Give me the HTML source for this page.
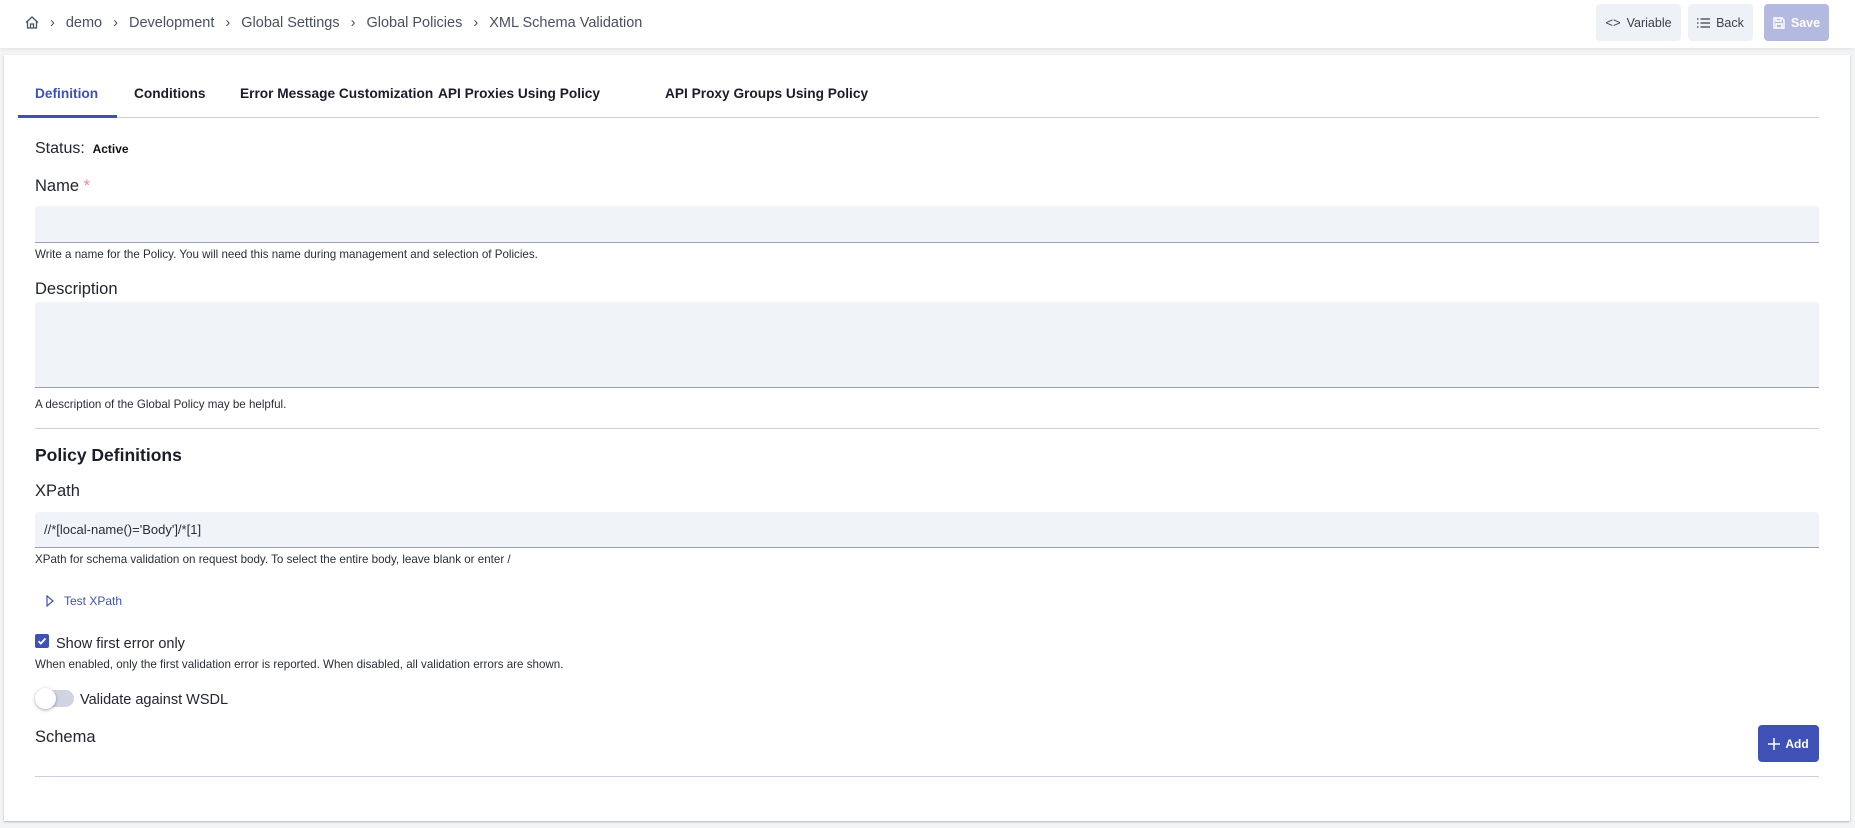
<!DOCTYPE html>
<html><head><meta charset="utf-8"><style>
*{box-sizing:border-box;margin:0;padding:0}
body{width:1855px;height:828px;background:#f3f4f6;font-family:"Liberation Sans",Arial,sans-serif;position:relative;overflow:hidden;color:#1f2430}
.hdr{position:absolute;left:0;top:0;width:1855px;height:48px;background:#fff;box-shadow:0 1px 4px rgba(0,0,0,.08)}
.bc{position:absolute;top:13px;left:25px;font-size:14.5px;color:#4a5060;display:flex;align-items:center;height:19px}
.bc .s{margin:0 11px;color:#4a5060}
.btn{position:absolute;top:4px;height:37px;border-radius:4px;background:#eef2f7;font-size:12.5px;color:#3a4050;display:flex;align-items:center;justify-content:center;gap:6px}
.card{position:absolute;left:4px;top:55px;width:1846px;height:766px;background:#fff;box-shadow:0 1px 2px rgba(0,0,0,.25)}
.a{position:absolute}
.tab{position:absolute;top:86px;font-size:13.7px;font-weight:bold;color:#1a1d29}
.lbl{position:absolute;left:35px;font-size:16.5px;color:#22262f}
.help{position:absolute;left:35px;font-size:11.6px;color:#2a2e38}
.inp{position:absolute;left:35px;width:1784px;background:#f0f3f8;border-bottom:1px solid #9aa0b4;border-radius:3px 3px 0 0}
</style></head><body>
<div class="hdr">
 <div class="bc">
  <svg width="14" height="13" viewBox="0 0 14 13" fill="none" stroke="#4a5060" stroke-width="1.3"><path d="M1 6.5L7 1l6 5.5M2.5 5.3V12h9V5.3M5.5 12V8h3v4"/></svg>
  <span class="s">›</span>demo<span class="s">›</span>Development<span class="s">›</span>Global Settings<span class="s">›</span>Global Policies<span class="s">›</span>XML Schema Validation
 </div>
 <div class="btn" style="left:1596px;width:85px"><span style="font-size:13px">&lt;&gt;</span>Variable</div>
 <div class="btn" style="left:1688px;width:65px"><svg width="13" height="10" viewBox="0 0 13 10" stroke="#3a4050" stroke-width="1.2"><path d="M0 1h1.5M0 5h1.5M0 9h1.5M3.5 1H13M3.5 5H13M3.5 9H13"/></svg>Back</div>
 <div class="btn" style="left:1764px;width:65px;background:#b4b9e0;color:#fff;font-weight:bold"><svg width="12" height="12" viewBox="0 0 12 12" fill="none" stroke="#fff" stroke-width="1.4"><path d="M1 1h8l2 2v8H1z M3 1v3h5V1 M3 11V7h6v4"/></svg>Save</div>
</div>
<div class="card"></div>
<div class="tab" style="left:35px;color:#3f51b5">Definition</div>
<div class="tab" style="left:134px">Conditions</div>
<div class="tab" style="left:240px">Error Message Customization</div>
<div class="tab" style="left:438px">API Proxies Using Policy</div>
<div class="tab" style="left:665px">API Proxy Groups Using Policy</div>
<div class="a" style="left:18px;top:117px;width:1801px;height:1px;background:#c9cfdc"></div>
<div class="a" style="left:18px;top:115px;width:99px;height:3px;background:#3f51b5"></div>

<div class="lbl" style="top:140px;font-size:16px">Status: <b style="font-size:12px;color:#111">&nbsp;Active</b></div>
<div class="lbl" style="top:177px">Name <span style="color:#f08a8a">*</span></div>
<div class="inp" style="top:206px;height:37px"></div>
<div class="help" style="top:248px">Write a name for the Policy. You will need this name during management and selection of Policies.</div>
<div class="lbl" style="top:280px">Description</div>
<div class="inp" style="top:302px;height:86px"></div>
<div class="help" style="top:398px">A description of the Global Policy may be helpful.</div>
<div class="a" style="left:35px;top:428px;width:1784px;height:1px;background:#c9cfdc"></div>
<div class="a" style="left:35px;top:445px;font-size:17.5px;font-weight:bold;color:#1a1d29">Policy Definitions</div>
<div class="lbl" style="top:482px">XPath</div>
<div class="inp" style="top:512px;height:36px"><span style="position:absolute;left:9px;top:10px;font-size:13px;color:#2a2e38">//*[local-name()='Body']/*[1]</span></div>
<div class="help" style="top:553px">XPath for schema validation on request body. To select the entire body, leave blank or enter /</div>
<svg class="a" style="left:46px;top:595px" width="8" height="12" viewBox="0 0 8 12" fill="none" stroke="#3f51b5" stroke-width="1.2"><path d="M1 1l6 5-6 5z"/></svg>
<div class="a" style="left:64px;top:594px;font-size:12px;color:#3f51b5">Test XPath</div>
<div class="a" style="left:35px;top:634px;width:14px;height:14px;background:#3f51b5;border-radius:2px"><svg width="14" height="14" viewBox="0 0 14 14" fill="none" stroke="#fff" stroke-width="1.8"><path d="M3.5 7.2l2.3 2.3 4.7-5"/></svg></div>
<div class="lbl" style="left:56px;top:636px;font-size:14.5px">Show first error only</div>
<div class="help" style="top:658px">When enabled, only the first validation error is reported. When disabled, all validation errors are shown.</div>
<div class="a" style="left:36px;top:690px;width:38px;height:17px;border-radius:9px;background:#cfd4e2"></div>
<div class="a" style="left:35px;top:688px;width:21px;height:21px;border-radius:50%;background:#fff;box-shadow:0 1px 3px rgba(0,0,0,.35)"></div>
<div class="lbl" style="left:80px;top:692px;font-size:14.5px">Validate against WSDL</div>
<div class="lbl" style="top:728px">Schema</div>
<div class="a" style="left:1758px;top:725px;width:61px;height:37px;background:#3f51b5;border-radius:4px;color:#fff;font-size:12px;font-weight:bold;display:flex;align-items:center;justify-content:center;gap:5px"><svg width="12" height="12" viewBox="0 0 12 12" stroke="#fff" stroke-width="1.5"><path d="M6 0v12M0 6h12"/></svg>Add</div>
<div class="a" style="left:35px;top:776px;width:1784px;height:1px;background:#c9cfdc"></div>
</body></html>
